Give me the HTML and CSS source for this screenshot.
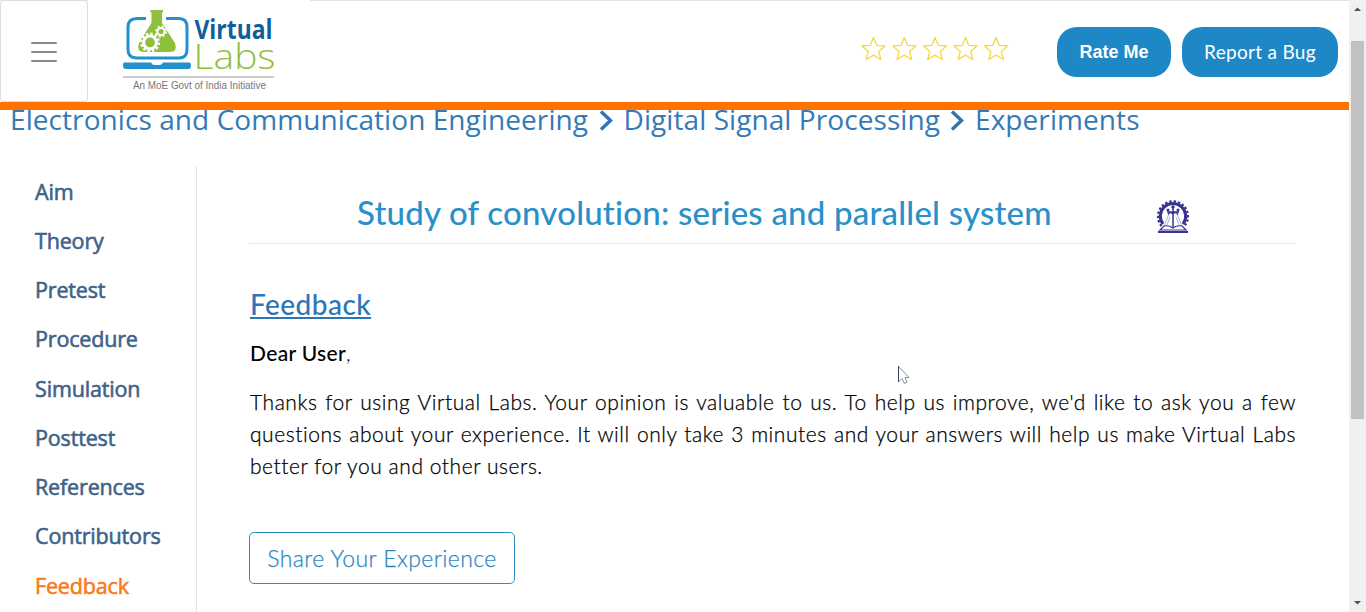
FILE: index.html
```html
<!DOCTYPE html>
<html lang="en">
<head>
<meta charset="utf-8">
<title>Virtual Labs</title>
<link rel="stylesheet" href="styles.css">
</head>
<body>
<div class="app">
  <div class="page">
    <header class="header">
      <button class="menu" aria-label="Menu"><span></span><span></span><span></span></button>
      <div class="brand">
      <svg class="logo" width="160" height="92" viewBox="0 0 160 92">
        <path d="M26 18.500H17Q8 18.500 8 27V49.500Q8 58 17 58H59Q67 58 67 49.500V27Q67 18.500 59 18.500H46" fill="none" stroke="#2590ce" stroke-width="3"/>
        <path d="M5 62.500H31Q32 65 35 65H39Q42 65 43 62.500H69Q71 62.500 71 65.500T69 69H6Q3 69 3 65.500T5 62.500Z" fill="#2590ce"/>
        <path d="M30.500 10H43V12.500H42V23L55 43Q58 52 50 52H24Q16 52 19 43L31.500 23V12.500H30.500Z" fill="#8fc03c"/>
        <circle cx="30" cy="42.500" r="6.400" fill="none" stroke="#fff" stroke-width="3"/>
        <circle cx="30" cy="42.500" r="8.700" fill="none" stroke="#fff" stroke-width="2.400" stroke-dasharray="2.500 2.055"/>
        <circle cx="41" cy="31.500" r="3.600" fill="none" stroke="#fff" stroke-width="2"/>
        <circle cx="41" cy="31.500" r="5.200" fill="none" stroke="#fff" stroke-width="1.600" stroke-dasharray="2.100 1.984"/>
        <text class="logo-virtual" x="74.500" y="39" textLength="78" lengthAdjust="spacingAndGlyphs">Virtual</text>
        <text class="logo-labs" x="73.500" y="69" textLength="82" lengthAdjust="spacingAndGlyphs">Labs</text>
        <path d="M3 77H154" stroke="#999" stroke-width="1.200"/>
        <text class="logo-tag" x="13" y="88.500" textLength="133" lengthAdjust="spacingAndGlyphs">An MoE Govt of India Initiative</text>
      </svg>
      </div>
      <svg class="stars" width="148" height="26" viewBox="0 0 148 26">
        <defs><path id="star" d="M12.500 1.500L15.700 9.300L24 9.900L17.700 15.400L19.800 23.500L12.500 19.100L5.200 23.500L7.300 15.400L1 9.900L9.300 9.300Z"/></defs>
        <g fill="#fff" stroke="#f5d840" stroke-width="1.300" stroke-linejoin="round">
          <use href="#star"/><use href="#star" x="30.800"/><use href="#star" x="61.500"/><use href="#star" x="92"/><use href="#star" x="122.600"/>
        </g>
      </svg>
      <button class="pill rate">Rate Me</button>
      <button class="pill bug">Report a Bug</button>
    </header>
    <nav class="crumbs">
      <a class="c1">Electronics and Communication Engineering</a>
      <svg class="chev" width="16" height="22" viewBox="0 0 16 22"><path d="M3 2.500L12.500 11.500L3 20.500"/></svg>
      <a class="c2">Digital Signal Processing</a>
      <svg class="chev" width="16" height="22" viewBox="0 0 16 22"><path d="M3 2.500L12.500 11.500L3 20.500"/></svg>
      <a class="c3">Experiments</a>
    </nav>
    <div class="body">
      <aside class="side">
        <a>Aim</a><a>Theory</a><a>Pretest</a><a>Procedure</a><a>Simulation</a><a>Posttest</a><a>References</a><a>Contributors</a><a class="active">Feedback</a>
      </aside>
      <main class="main">
        <div class="title-row">
          <h1>Study of convolution: series and parallel system</h1>
          <svg class="seal" width="34" height="38" viewBox="0 0 34 38">
            <g fill="none" stroke="#3a328f">
              <path d="M7 27A12.700 12.700 0 1 1 27 27" stroke-width="3"/>
              <path d="M5.500 29A15 15 0 1 1 28.500 29" stroke-width="2.200" stroke-dasharray="2.400 1.900"/>
              <path d="M17 9V30M11 15H23M12 17.500Q14 14 17 17Q20 14 22 17.500" stroke-width="1.500"/>
              <path d="M13 17L8 29M21 17L26 29M14 20L11 28M20 20L23 28" stroke-width=".8" opacity=".5"/>
              <path d="M4 33L8 29Q13 28 17 31Q21 28 26 29L30 33Z" stroke-width="1.200"/>
              <path d="M2 35H32" stroke-width="2"/>
            </g>
            <g fill="#3a328f"><circle cx="12" cy="13" r="1.500"/><circle cx="22" cy="13" r="1.500"/><circle cx="17" cy="10" r="1.700"/></g>
          </svg>
        </div>
        <h2>Feedback</h2>
        <p class="dear"><b>Dear User</b>,</p>
        <p class="text"><span>Thanks for using Virtual Labs. Your opinion is valuable to us. To help us improve, we'd like to ask you a few</span><span>questions about your experience. It will only take 3 minutes and your answers will help us make Virtual Labs</span><span class="last">better for you and other users.</span></p>
        <button class="share">Share Your Experience</button>
      </main>
    </div>
  </div>
  <div class="scroll">
    <svg width="9" height="6" viewBox="0 0 9 6"><path d="M1 5L4.500 1.500L8 5Z" fill="#505050"/></svg>
    <div class="thumb"></div>
    <svg width="9" height="6" viewBox="0 0 9 6"><path d="M1 1L4.500 4.500L8 1Z" fill="#505050"/></svg>
  </div>
  <svg class="cursor" width="14" height="20" viewBox="0 0 14 20"><path d="M1.500 1.500V17L5 13.500L7.500 18.500L10 17L8 12.500H12Z" fill="#fff" stroke="#8d90a2"/><path d="M1.500 1V17" stroke="#36405f"/></svg>
</div>
</body>
</html>
```
FILE: styles.css
```css
* { box-sizing: border-box; }
body { margin: 0; background: #fff; overflow: hidden; font-family: Lato, sans-serif; }
button { font-family: inherit; padding: 0; }
.app { position: relative; display: flex; width: 1366px; height: 612px; }
.page { width: 1349px; height: 612px; overflow: hidden; }
.header { display: flex; height: 110px; border-bottom: 8px solid #ff7200; box-shadow: inset 0 1px #dfe3e3; }
.menu { width: 88px; height: 102px; border: 1px solid #ddd; border-radius: 4px; background: #fff; display: flex; flex-direction: column; justify-content: center; align-items: center; gap: 7px; padding-top: 1px; }
.menu span { width: 26px; height: 2px; border-radius: 1px; background: #888; }
.brand { width: 222px; height: 102px; padding-left: 32px; background: #fff; }
.logo { display: block; overflow: visible; }
.logo-virtual { font: 700 26px "Open Sans", sans-serif; fill: #0f6098; }
.logo-labs { font: 300 34px "Open Sans", sans-serif; fill: #8fc03c; }
.logo-tag { font: 10px "Liberation Sans", sans-serif; fill: #777; }
.stars { margin: 36px 0 0 551px; }
.pill { height: 50px; margin-top: 27px; border: 0; border-radius: 20px; background: #1e88c7; color: #fff; }
.rate { width: 114px; margin-left: 48px; font: bold 18px "Liberation Sans", sans-serif; }
.bug { width: 156px; margin-left: 11px; font-size: 19px; letter-spacing: .3px; padding-bottom: 1px; }
.crumbs { display: flex; align-items: center; height: 40px; margin-top: -11px; padding-left: 10px; color: #337ab7; font: 28px/40px "Open Sans", sans-serif; letter-spacing: .075px; clip-path: inset(11px 0 0); white-space: nowrap; }
.crumbs .c1 { width: 578px; }
.crumbs .c2 { width: 316px; }
.chev { flex: none; margin: 1px 10px 0 9.500px; fill: none; stroke: #2e75b5; stroke-width: 3.400; }
.body { display: flex; margin-top: 27px; height: 446px; }
.side { width: 197px; padding: .5px 0 0 35px; border-right: 1px solid #e3e3e3; color: #3e6389; font: 400 21.500px/49.250px "Open Sans", sans-serif; letter-spacing: -.16px; -webkit-text-stroke: .6px currentColor; }
.side a { display: block; }
.side .active { color: #fb7a1b; }
.main { width: 1047px; margin-left: 52px; }
.title-row { display: flex; height: 78px; border-bottom: 1px solid #e8e8e8; }
h1 { margin: 24px 0 0 108px; width: 694px; font-size: 33px; line-height: 44px; font-weight: 500; letter-spacing: .2px; color: #2a90c9; white-space: nowrap; }
.seal { margin: 31px 0 0 104.500px; }
h2 { margin: 40px 0 0 1px; font-size: 28px; line-height: 40px; font-weight: 500; letter-spacing: .45px; color: #2e75b5; text-decoration: underline; text-decoration-thickness: 2px; text-underline-offset: 2px; }
p { margin: 0 0 0 1px; font-size: 21px; line-height: 32px; color: #000; }
.dear { margin-top: 13px; font-weight: 300; letter-spacing: .35px; }
.dear b { font-weight: 500; }
.text { margin-top: 17px; white-space: nowrap; font-weight: 300; letter-spacing: .55px; -webkit-text-stroke: .25px currentColor; }
.text span { display: block; width: 1046px; text-align-last: justify; }
.text .last { width: 292px; }
.share { display: block; width: 266px; height: 52px; margin-top: 50px; padding-bottom: 1px; border: 1px solid #2c8fc0; border-radius: 5px; background: #fff; color: #2c86bf; font-size: 23px; font-weight: 300; letter-spacing: .42px; -webkit-text-stroke: .25px currentColor; }
.scroll { width: 17px; height: 612px; background: #f0f0f0; display: flex; flex-direction: column; align-items: center; padding: 6px 0; }
.thumb { width: 13px; height: 378px; margin: 29px 0 auto; background: #c1c1c1; }
.cursor { position: absolute; left: 897px; top: 365px; }
```
